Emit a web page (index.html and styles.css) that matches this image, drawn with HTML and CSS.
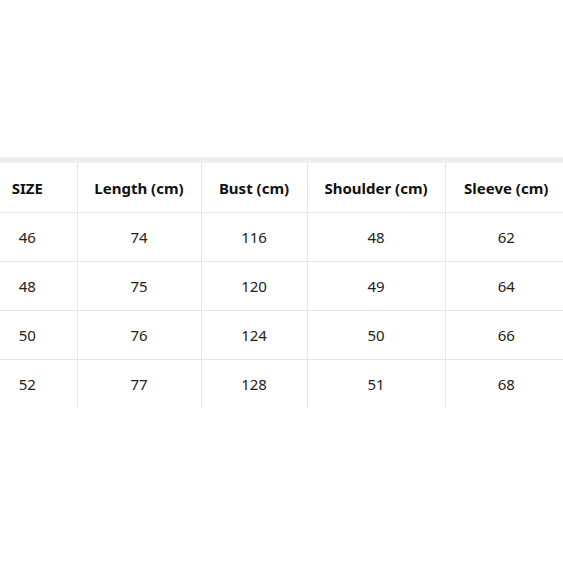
FILE: index.html
```html
<!DOCTYPE html>
<html>
<head>
<meta charset="utf-8">
<link rel="stylesheet" href="styles.css">
</head>
<body>
<div class="page">
  <div class="wrap">
    <table class="size-table">
      <colgroup>
        <col class="c1"><col class="c2"><col class="c3"><col class="c4"><col class="c5">
      </colgroup>
      <thead>
        <tr><th>SIZE</th><th>Length (cm)</th><th>Bust (cm)</th><th>Shoulder (cm)</th><th>Sleeve (cm)</th></tr>
      </thead>
      <tbody>
        <tr><td>46</td><td>74</td><td>116</td><td>48</td><td>62</td></tr>
        <tr><td>48</td><td>75</td><td>120</td><td>49</td><td>64</td></tr>
        <tr><td>50</td><td>76</td><td>124</td><td>50</td><td>66</td></tr>
        <tr><td>52</td><td>77</td><td>128</td><td>51</td><td>68</td></tr>
      </tbody>
    </table>
  </div>
</div>
</body>
</html>
```
FILE: styles.css
```css
html, body { margin: 0; padding: 0; background: #fff; }
.page { padding-top: 157px; }
.wrap { overflow: hidden; width: 563px; }
.size-table {
  margin-left: -22px;
  width: 589px;
  border-collapse: collapse;
  table-layout: fixed;
  border-top: 6px solid #f0f0f0;
  font-family: "Noto Sans", "Noto Sans CJK KR", sans-serif;
  font-size: 15px;
  color: #222;
}
.c1 { width: 99px; }
.c2 { width: 124px; }
.c3 { width: 106px; }
.c4 { width: 138px; }
.c5 { width: 122px; }
.size-table th, .size-table td {
  height: 48px;
  padding: 0;
  text-align: center;
  border-right: 1px solid #e6e6e6;
  border-bottom: 1px solid #e6e6e6;
}
.size-table th { height: 49px; font-weight: bold; color: #111; }
.size-table td { font-weight: normal; }
.size-table tbody tr:last-child td { border-bottom: none; }
.size-table th:last-child, .size-table td:last-child { border-right: none; }
```
